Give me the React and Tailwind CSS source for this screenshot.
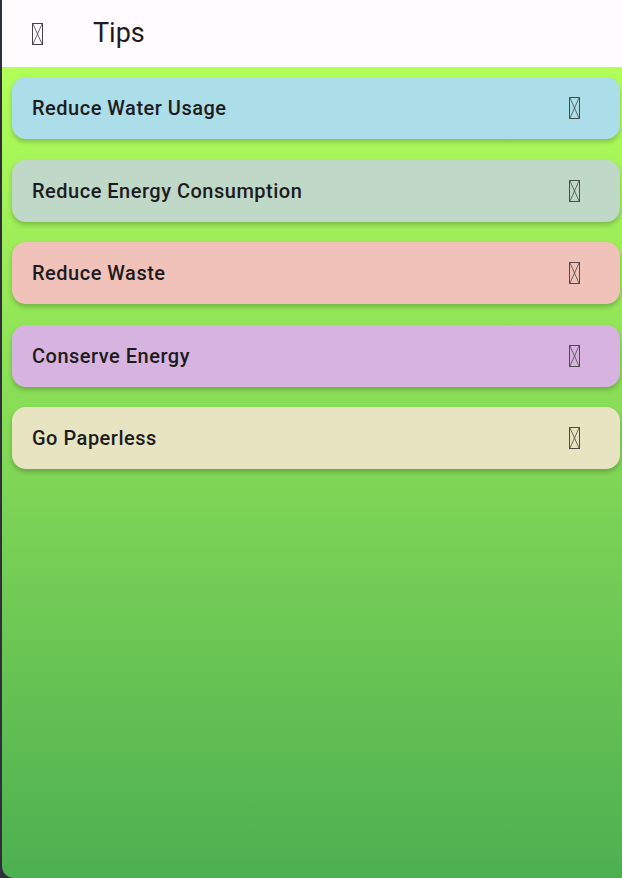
import React from "react";

const tips = [
  { title: "Reduce Water Usage", bg: "bg-[#acdeea]" },
  { title: "Reduce Energy Consumption", bg: "bg-[#bfd8c8]" },
  { title: "Reduce Waste", bg: "bg-[#f0c2ba]" },
  { title: "Conserve Energy", bg: "bg-[#d7b4df]" },
  { title: "Go Paperless", bg: "bg-[#e8e4c2]" },
];

// missing-glyph box, as the font fallback draws it
function Tofu({ className }) {
  return (
    <svg width="11" height="22" viewBox="0 0 11 22" className={className}>
      <rect x="0.5" y="0.5" width="10" height="21" fill="none" stroke="currentColor" strokeWidth="1" />
      <path d="M1 1 L10 21 M10 1 L1 21" stroke="currentColor" strokeWidth="0.8" fill="none" />
    </svg>
  );
}

export default function App() {
  return (
    <div
      className="flex w-[622px] h-[878px] bg-[#2d2f3b]"
      style={{ fontFamily: "Roboto, 'Noto Sans', sans-serif" }}
    >
      <div className="ml-[2px] flex flex-1 flex-col">
        {/* App bar */}
        <header className="flex h-[67px] items-center bg-[#fffbfe] text-[#1d1b20]">
          <Tofu className="ml-[30px] text-[#444]" />
          <h1 className="ml-[50px] text-[27px] leading-none">Tips</h1>
        </header>

        {/* Tip list */}
        <main className="flex flex-1 flex-col gap-[20.5px] bg-gradient-to-b from-[#b2ff59] to-[#4caf50] pl-[10px] pr-[2px] pt-[10px] rounded-bl-[12px]">
          {tips.map((tip) => (
            <div
              key={tip.title}
              className={`flex h-[62px] items-center justify-between rounded-[14px] pl-[20px] pr-[40px] shadow-[0_3px_5px_rgba(0,0,0,0.22)] ${tip.bg}`}
            >
              <span className="text-[20px] font-medium tracking-[0.5px] text-[#1d1b20]">
                {tip.title}
              </span>
              <Tofu className="text-[#4a4a4a]" />
            </div>
          ))}
        </main>
      </div>
    </div>
  );
}
